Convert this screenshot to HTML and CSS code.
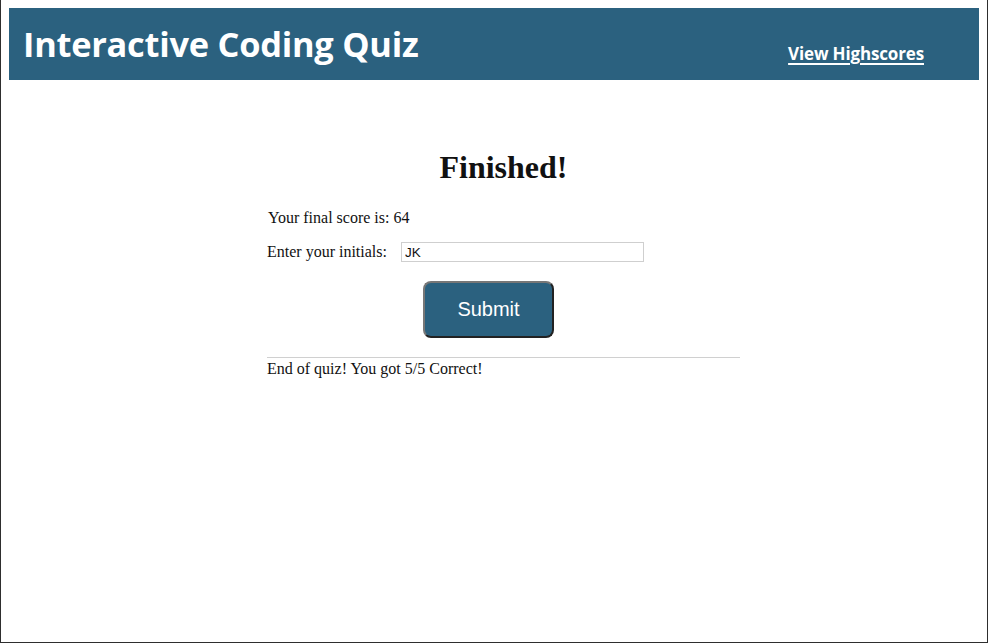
FILE: index.html
```html
<!DOCTYPE html>
<html>
<head>
<meta charset="utf-8">
<title>Interactive Coding Quiz</title>
<link rel="stylesheet" href="styles.css">
</head>
<body>
<header class="topbar">
  <h1 class="brand">Interactive Coding Quiz</h1>
  <a class="scores-link" href="#">View Highscores</a>
</header>
<main class="quiz">
  <section class="finish">
    <h2 class="finish-title">Finished!</h2>
    <p class="score-line">Your final score is: 64</p>
    <div class="initials-row">
      <label class="initials-label" for="initials">Enter your initials:</label>
      <input class="initials-input" id="initials" type="text" value="JK">
    </div>
    <div class="submit-row">
      <button class="submit-btn" type="button">Submit</button>
    </div>
    <div class="result">End of quiz! You got 5/5 Correct!</div>
  </section>
</main>
</body>
</html>
```
FILE: styles.css
```css
html {
  height: 643px;
  box-sizing: border-box;
  border: 1px solid #2e2e2e;
  border-top: 0;
  background: #fff;
}
body {
  margin: 8px;
  font-family: "Liberation Serif", "Times New Roman", serif;
  font-size: 16px;
  color: #111;
}
.topbar {
  height: 72px;
  background: #2b617f;
  display: flex;
  justify-content: space-between;
  align-items: flex-start;
  padding: 0 55px 0 14px;
}
.brand {
  margin: 0;
  padding-top: 16px;
  font-family: "Open Sans", sans-serif;
  font-weight: 700;
  font-size: 34.4px;
  line-height: 40px;
  color: #fff;
  letter-spacing: -0.25px;
}
.scores-link {
  margin-top: 35px;
  font-family: "Open Sans", sans-serif;
  font-weight: 700;
  font-size: 17px;
  line-height: 22px;
  color: #fff;
  text-decoration: underline;
  text-decoration-thickness: 2px;
  text-underline-offset: 3px;
  letter-spacing: -0.15px;
}
.quiz {
  display: flex;
  padding-top: 69px;
}
.finish {
  width: 473px;
  margin-left: 258px;
  display: flex;
  flex-direction: column;
}
.finish-title {
  margin: 0;
  text-align: center;
  font-size: 32px;
  line-height: 37px;
  font-weight: 700;
}
.score-line {
  margin: 23px 0 0 1px;
  line-height: 18px;
}
.initials-row {
  display: flex;
  align-items: center;
  gap: 14px;
  margin-top: 15px;
}
.initials-label {
  line-height: 18px;
}
.initials-input {
  width: 243px;
  height: 20px;
  box-sizing: border-box;
  border: 1px solid #cfcfcf;
  padding: 0 3px;
  margin: 0;
  font-family: "Liberation Sans", Arial, sans-serif;
  font-size: 13.5px;
  color: #111;
}
.submit-row {
  display: flex;
  margin-top: 19px;
  padding-left: 156px;
}
.submit-btn {
  width: 131px;
  height: 57px;
  box-sizing: border-box;
  background: #2b617f;
  color: #fff;
  border: 2px solid;
  border-color: #777 #222 #222 #777;
  border-radius: 8px;
  font-family: "Liberation Sans", Arial, sans-serif;
  font-size: 20px;
}
.result {
  margin-top: 19px;
  padding-top: 1px;
  border-top: 1px solid #d0d0d0;
  line-height: 19px;
}
```
